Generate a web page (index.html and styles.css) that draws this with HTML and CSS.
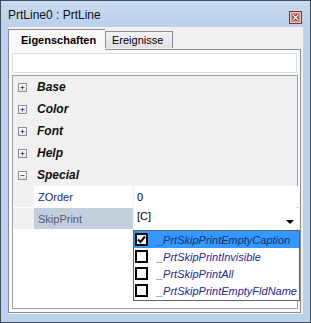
FILE: index.html
```html
<!DOCTYPE html>
<html lang="de">
<head>
    <meta charset="UTF-8">
    <title>PrtLine0 : PrtLine</title>
    <link rel="stylesheet" href="styles.css">
</head>
<body>
    <div class="window">
        <!-- Title bar -->
        <div class="titlebar">
            <span class="title">PrtLine0 : PrtLine</span>
            <span class="closeBtn">
                <svg width="13" height="13" viewBox="0 0 13 13">
                    <rect x="0.5" y="0.5" width="12" height="12" fill="#d98b86" stroke="#86322f"/>
                    <rect x="1.5" y="1.5" width="10" height="10" fill="none" stroke="#efc2bf"/>
                    <path d="M4 4 L9 9 M9 4 L4 9" stroke="#5a1e1c" stroke-width="3"/>
                    <path d="M4 4 L9 9 M9 4 L4 9" stroke="#ffffff" stroke-width="1.4"/>
                </svg>
            </span>
        </div>

        <div class="client">
            <!-- Tabs -->
            <div class="tabs">
                <div class="tab active">Eigenschaften</div>
                <div class="tab">Ereignisse</div>
            </div>

            <div class="panel">
                <div class="search"></div>

                <div class="grid">
                    <div class="category"><svg class="toggle" width="9" height="9" viewBox="0 0 9 9"><path d="M2 4.5 H7 M4.5 2 V7" stroke="#1f3470"/></svg>Base</div>
                    <div class="category"><svg class="toggle" width="9" height="9" viewBox="0 0 9 9"><path d="M2 4.5 H7 M4.5 2 V7" stroke="#1f3470"/></svg>Color</div>
                    <div class="category"><svg class="toggle" width="9" height="9" viewBox="0 0 9 9"><path d="M2 4.5 H7 M4.5 2 V7" stroke="#1f3470"/></svg>Font</div>
                    <div class="category"><svg class="toggle" width="9" height="9" viewBox="0 0 9 9"><path d="M2 4.5 H7 M4.5 2 V7" stroke="#1f3470"/></svg>Help</div>
                    <div class="category"><svg class="toggle" width="9" height="9" viewBox="0 0 9 9"><path d="M2 4.5 H7" stroke="#1f3470"/></svg>Special</div>

                    <div class="prop">
                        <div class="indent"></div>
                        <div class="name">ZOrder</div>
                        <div class="value">0</div>
                    </div>
                    <div class="prop selected">
                        <div class="indent"></div>
                        <div class="name">SkipPrint</div>
                        <div class="value"><span class="raised">[C]</span><span class="arrow"></span></div>
                    </div>

                    <!-- Dropdown of flags -->
                    <div class="dropdown">
                        <div class="item current"><span class="check">
                            <svg width="9" height="9" viewBox="0 0 9 9"><path d="M1 4.5 L3.5 7 L8 1.5" fill="none" stroke="#000" stroke-width="2"/></svg>
                        </span>_PrtSkipPrintEmptyCaption</div>
                        <div class="item"><span class="check"></span>_PrtSkipPrintInvisible</div>
                        <div class="item"><span class="check"></span>_PrtSkipPrintAll</div>
                        <div class="item"><span class="check"></span>_PrtSkipPrintEmptyFldName</div>
                    </div>
                </div>
            </div>
        </div>
    </div>
</body>
</html>
```

FILE: styles.css
```css
body {
    margin: 0;
    padding: 0;
    font-family: "Liberation Sans", Arial, sans-serif;
    background-color: #b9d1ea;
}

.window {
    width: 311px;
    height: 323px;
    box-sizing: border-box;
    border: 1px solid #434e5c;
    background-color: #b9d1ea;
    display: flex;
    flex-direction: column;
}

.titlebar {
    height: 26px;
    display: flex;
    align-items: center;
    justify-content: space-between;
    padding: 0 8px 0 7px;
    background: linear-gradient(#c8dbef, #b9d1ea);
}

.title {
    font-size: 12px;
    color: #111;
    margin-top: 1px;
}

.closeBtn {
    display: flex;
    margin-top: 6px;
}

.client {
    margin: 0 7px 8px 7px;
    flex: 1;
    background-color: #f0f0f0;
    padding: 3px 2px 1px 0;
    display: flex;
    flex-direction: column;
}

/* Tabs */
.tabs {
    display: flex;
    align-items: flex-end;
    height: 19px;
    position: relative;
    z-index: 1;
}

.tab {
    font-size: 11px;
    color: #000;
    height: 17px;
    box-sizing: border-box;
    border: 1px solid #898c95;
    border-bottom: none;
    padding: 2px 9px 0 6px;
    background: linear-gradient(#f2f2f2, #e1e1e1);
    margin-bottom: 1px;
}

.tab.active {
    font-weight: bold;
    font-size: 11px;
    height: 21px;
    width: 97px;
    padding: 4px 0 0 12px;
    background: #f9f9f9;
    margin-bottom: -1px;
    border-right: none;
}

.panel {
    flex: 1;
    border: 1px solid #898c95;
    background-color: #f9f9f9;
    padding: 3px 2px 3px 3px;
    display: flex;
    flex-direction: column;
    gap: 2px;
}

.search {
    height: 20px;
    box-sizing: border-box;
    border: 1px solid #dadde2;
    border-radius: 2px;
    background-color: #fff;
    margin-right: 1px;
}

/* Property grid */
.grid {
    flex: 1;
    position: relative;
    border: 1px solid #a0a0a0;
    background-color: #fff;
}

.category {
    height: 22px;
    display: flex;
    align-items: center;
    background-color: #f0f0f0;
    font-size: 12px;
    font-weight: bold;
    font-style: italic;
    color: #111;
}

.toggle {
    box-sizing: border-box;
    border: 1px solid #8f8f8f;
    background: linear-gradient(#ffffff, #e4e4e4);
    margin: 0 10px 0 5px;
}

.prop {
    display: grid;
    grid-template-columns: 20px 99px 165px;
    column-gap: 1px;
    height: 21px;
    margin-bottom: 1px;
    background-color: #f0f0f0;
    font-size: 11px;
}

.prop .indent {
    background-color: #f0f0f0;
}

.prop .name {
    background-color: #fff;
    color: #122a8a;
    padding-left: 4px;
    display: flex;
    align-items: center;
}

.prop .value {
    background-color: #fff;
    color: #000;
    padding-left: 3px;
    display: flex;
    align-items: center;
    justify-content: space-between;
}

.prop.selected .name {
    background-color: #c2cedb;
    color: #555c6a;
}

.raised {
    align-self: flex-start;
    margin-top: 2px;
}

.arrow {
    width: 0;
    height: 0;
    border-left: 4px solid transparent;
    border-right: 4px solid transparent;
    border-top: 4px solid #000;
    margin: 6px 5px 0 0;
}

.dropdown {
    position: absolute;
    left: 120px;
    top: 154px;
    width: 167px;
    box-sizing: border-box;
    border: 1px solid #646464;
    background-color: #fff;
    padding-bottom: 1px;
}

.item {
    height: 17px;
    display: flex;
    align-items: center;
    font-size: 11px;
    font-style: italic;
    color: #27259a;
}

.item.current {
    background-color: #3399ff;
    color: #1d2f6a;
}

.check {
    width: 13px;
    height: 13px;
    box-sizing: border-box;
    border: 2px solid #000;
    background-color: #fff;
    margin: 0 9px 0 1px;
    display: flex;
    align-items: center;
    justify-content: center;
}
```
